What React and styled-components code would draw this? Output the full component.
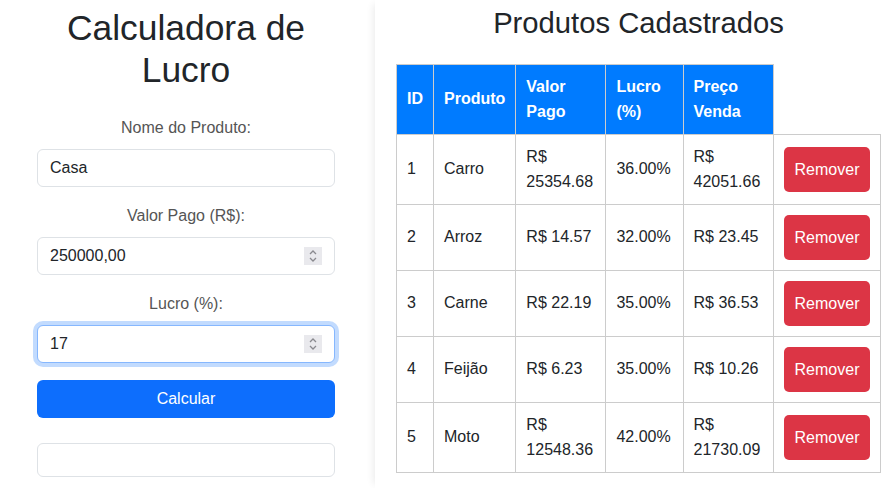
import React, { useState } from 'react'
import styled, { createGlobalStyle } from 'styled-components'

const GlobalStyle = createGlobalStyle`
  *, *::before, *::after { box-sizing: border-box; }
  body {
    margin: 0;
    font-family: "Liberation Sans", Arial, sans-serif;
    font-size: 16px;
    line-height: 1.5;
    color: #212529;
    background: #fff;
  }
`

const produtos = [
  { id: 1, nome: 'Carro', valor: 25354.68, lucro: 36, venda: 42051.66 },
  { id: 2, nome: 'Arroz', valor: 14.57, lucro: 32, venda: 23.45 },
  { id: 3, nome: 'Carne', valor: 22.19, lucro: 35, venda: 36.53 },
  { id: 4, nome: 'Feijão', valor: 6.23, lucro: 35, venda: 10.26 },
  { id: 5, nome: 'Moto', valor: 12548.36, lucro: 42, venda: 21730.09 },
]

export default function App() {
  const [nome, setNome] = useState('Casa')
  const [valor, setValor] = useState('250000,00')
  const [lucro, setLucro] = useState('17')

  return (
    <>
      <GlobalStyle />
      <Page>
        <LeftPanel>
          <Column>
            <Title>Calculadora de Lucro</Title>
            <Form onSubmit={(e) => e.preventDefault()}>
              <Label htmlFor="nome">Nome do Produto:</Label>
              <Field>
                <Input id="nome" value={nome} onChange={(e) => setNome(e.target.value)} />
              </Field>

              <Label htmlFor="valor">Valor Pago (R$):</Label>
              <Field>
                <Input id="valor" value={valor} onChange={(e) => setValor(e.target.value)} />
                <Spinner />
              </Field>

              <Label htmlFor="lucro">Lucro (%):</Label>
              <Field>
                <Input id="lucro" $focused autoFocus value={lucro} onChange={(e) => setLucro(e.target.value)} />
                <Spinner />
              </Field>

              <PrimaryButton type="submit">Calcular</PrimaryButton>
              <Result />
            </Form>
          </Column>
        </LeftPanel>

        <RightPanel>
          <SubTitle>Produtos Cadastrados</SubTitle>
          <Table>
            <thead>
              <tr>
                <Th>ID</Th>
                <Th>Produto</Th>
                <Th>Valor Pago</Th>
                <Th>Lucro (%)</Th>
                <Th>Preço Venda</Th>
              </tr>
            </thead>
            <tbody>
              {produtos.map((p) => (
                <tr key={p.id}>
                  <Td>{p.id}</Td>
                  <Td>{p.nome}</Td>
                  <Td>R$ {p.valor.toFixed(2)}</Td>
                  <Td>{p.lucro.toFixed(2)}%</Td>
                  <Td>R$ {p.venda.toFixed(2)}</Td>
                  <Td>
                    <DangerButton>Remover</DangerButton>
                  </Td>
                </tr>
              ))}
            </tbody>
          </Table>
        </RightPanel>
      </Page>
    </>
  )
}

function Spinner() {
  return (
    <SpinBox>
      <svg width="10" height="14" viewBox="0 0 10 14" fill="none" stroke="#8a8a8f" strokeWidth="1.3">
        <path d="M2 5 L5 2 L8 5" />
        <path d="M2 9 L5 12 L8 9" />
      </svg>
    </SpinBox>
  )
}

const Page = styled.div`
  display: flex;
  min-height: 100vh;
`

const LeftPanel = styled.section`
  flex: 0 0 375px;
  padding: 7px 0 0 37px;
  background: #fff;
  text-align: center;
`

const Column = styled.div`
  width: 298px;
`

const Title = styled.h1`
  margin: 0 0 24.3px;
  font-size: 35.4px;
  line-height: 1.2;
  font-weight: 400;
  color: #212529;
`

const Form = styled.form`
  display: flex;
  flex-direction: column;
`

const Label = styled.label`
  display: block;
  margin-bottom: 9px;
  font-size: 16px;
  line-height: 24px;
  color: #555;
  text-align: center;
`

const Field = styled.div`
  position: relative;
  margin-bottom: 17px;
`

const Input = styled.input`
  display: block;
  width: 100%;
  height: 38px;
  padding: 6px 12px;
  font-family: inherit;
  font-size: 16px;
  line-height: 24px;
  color: #212529;
  background: #fff;
  border: 1px solid ${(p) => (p.$focused ? '#86b7fe' : '#dee2e6')};
  border-radius: 6px;
  outline: none;
  box-shadow: ${(p) => (p.$focused ? '0 0 0 4px rgba(13, 110, 253, 0.25)' : 'none')};

  &:focus {
    border-color: #86b7fe;
    box-shadow: 0 0 0 4px rgba(13, 110, 253, 0.25);
  }
`

const SpinBox = styled.span`
  position: absolute;
  top: 10px;
  right: 13px;
  width: 18px;
  height: 18px;
  background: #e9e9ed;
  display: flex;
  align-items: center;
  justify-content: center;
  pointer-events: none;
`

const PrimaryButton = styled.button`
  height: 38px;
  margin-bottom: 25px;
  font-family: inherit;
  font-size: 16px;
  color: #fff;
  background: #0d6efd;
  border: none;
  border-radius: 6px;
  cursor: pointer;
`

const Result = styled.div`
  height: 34px;
  border: 1px solid #dee2e6;
  border-radius: 6px;
`

const RightPanel = styled.section`
  flex: 1;
  padding: 6px 11px 0 21px;
  background: #fff;
  box-shadow: -5px 0 8px -4px rgba(0, 0, 0, 0.09);
`

const SubTitle = styled.h2`
  margin: 0 0 23px;
  font-size: 29.23px;
  line-height: 1.2;
  font-weight: 400;
  text-align: center;
  color: #212529;
`

const Table = styled.table`
  border-collapse: collapse;
`

const Th = styled.th`
  padding: 10px;
  background: #007bff;
  color: #fff;
  font-weight: 700;
  line-height: 24.5px;
  text-align: left;
  vertical-align: middle;
  border: 1px solid #ccc;
`

const Td = styled.td`
  padding: 10px;
  line-height: 24.5px;
  text-align: left;
  vertical-align: middle;
  border: 1px solid #ccc;
`

const DangerButton = styled.button`
  padding: 10px 10.5px;
  font-family: inherit;
  font-size: 16px;
  line-height: 25px;
  color: #fff;
  background: #dc3545;
  border: none;
  border-radius: 5px;
  cursor: pointer;
`
